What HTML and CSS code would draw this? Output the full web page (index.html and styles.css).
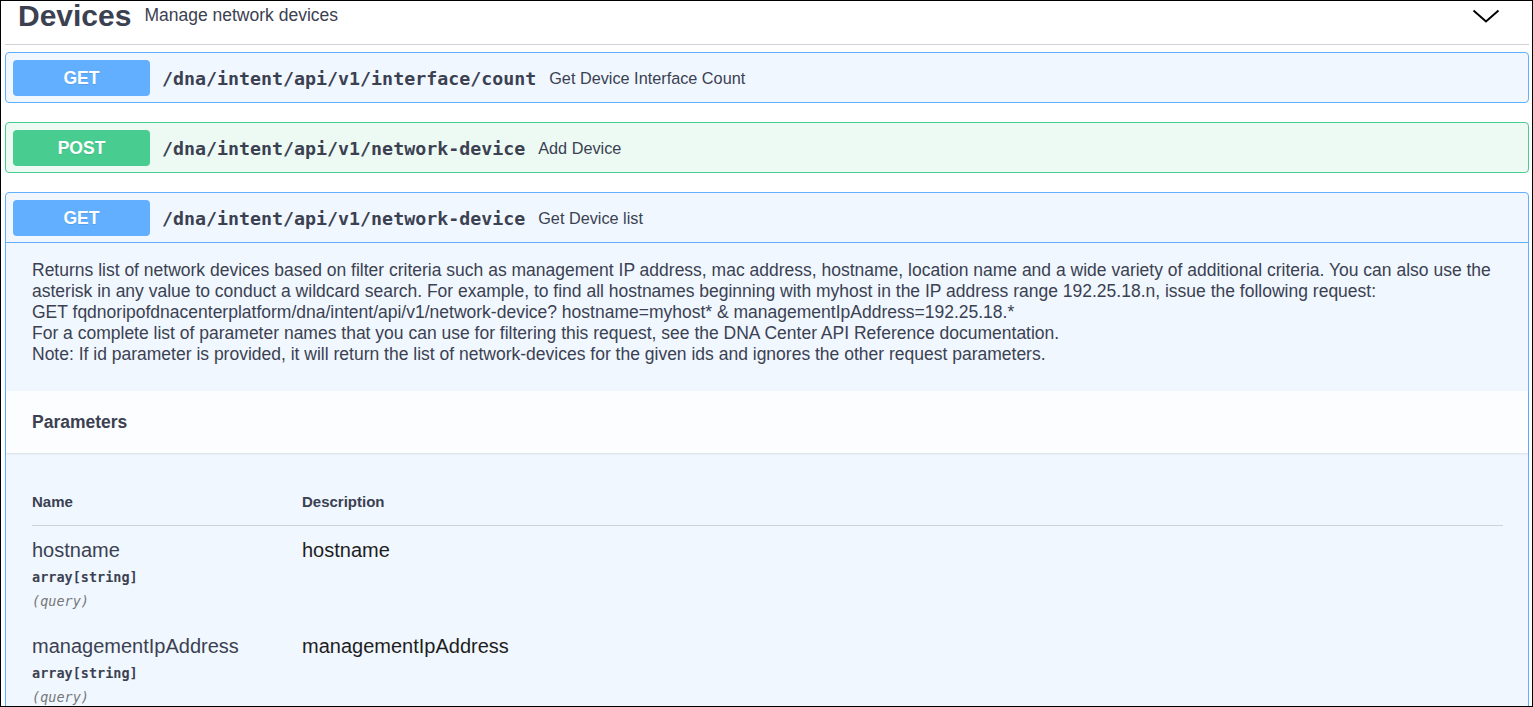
FILE: index.html
```html
<!DOCTYPE html>
<html lang="en">
<head>
<meta charset="utf-8">
<title>Devices</title>
<link rel="stylesheet" href="styles.css">
</head>
<body>
<div class="frame">
  <div class="tag-header">
    <h3 class="tag-title">Devices</h3>
    <small class="tag-desc">Manage network devices</small>
    <svg class="chevron" viewBox="0 0 28 14" width="28" height="14" aria-hidden="true">
      <polyline points="1.5,1.5 14,12.5 26.5,1.5" fill="none" stroke="#000" stroke-width="2"/>
    </svg>
  </div>
  <div class="ops">
    <div class="opblock get">
      <div class="summary">
        <span class="method">GET</span>
        <span class="path">/dna/intent/api/v1/interface/count</span>
        <span class="summary-desc">Get Device Interface Count</span>
      </div>
    </div>
    <div class="opblock post">
      <div class="summary">
        <span class="method">POST</span>
        <span class="path">/dna/intent/api/v1/network-device</span>
        <span class="summary-desc">Add Device</span>
      </div>
    </div>
    <div class="opblock get open">
      <div class="summary">
        <span class="method">GET</span>
        <span class="path">/dna/intent/api/v1/network-device</span>
        <span class="summary-desc">Get Device list</span>
      </div>
      <div class="desc">
        <p>Returns list of network devices based on filter criteria such as management IP address, mac address, hostname, location name and a wide variety of additional criteria. You can also use the asterisk in any value to conduct a wildcard search. For example, to find all hostnames beginning with myhost in the IP address range 192.25.18.n, issue the following request:<br>GET fqdnoripofdnacenterplatform/dna/intent/api/v1/network-device? hostname=myhost* &amp; managementIpAddress=192.25.18.*<br>For a complete list of parameter names that you can use for filtering this request, see the DNA Center API Reference documentation.<br>Note: If id parameter is provided, it will return the list of network-devices for the given ids and ignores the other request parameters.</p>
      </div>
      <div class="section-header"><h4>Parameters</h4></div>
      <div class="table-container">
        <table class="params">
          <thead>
            <tr><th class="col-name">Name</th><th>Description</th></tr>
          </thead>
          <tbody>
            <tr>
              <td>
                <div class="param-name">hostname</div>
                <div class="param-type">array[string]</div>
                <div class="param-in">(query)</div>
              </td>
              <td><div class="param-desc">hostname</div></td>
            </tr>
            <tr>
              <td>
                <div class="param-name">managementIpAddress</div>
                <div class="param-type">array[string]</div>
                <div class="param-in">(query)</div>
              </td>
              <td><div class="param-desc">managementIpAddress</div></td>
            </tr>
            <tr>
              <td>
                <div class="param-name">macAddress</div>
                <div class="param-type">array[string]</div>
                <div class="param-in">(query)</div>
              </td>
              <td><div class="param-desc">macAddress</div></td>
            </tr>
          </tbody>
        </table>
      </div>
    </div>
  </div>
</div>
</body>
</html>
```
FILE: styles.css
```css
* { box-sizing: border-box; }

body {
  margin: 0;
  background: #fff;
  font-family: "Liberation Sans", Arial, sans-serif;
  color: #3b4151;
}

.frame {
  width: 1533px;
  height: 707px;
  border: 1px solid #000;
  overflow: hidden;
  padding: 0 3px 0 4px;
}

.tag-header {
  display: flex;
  align-items: center;
  height: 44px;
  padding: 0 29px 14px 13px;
  border-bottom: 1px solid #cfd1d6;
}

.tag-title {
  margin: 0;
  font-size: 30px;
  line-height: 30px;
  font-weight: 700;
}

.tag-desc {
  flex: 1;
  padding: 0 0 0 13px;
  font-size: 17.5px;
}

.chevron { display: block; }

.ops { padding-top: 7px; }

.opblock {
  border: 1px solid;
  border-radius: 4px;
  margin-bottom: 19px;
}

.opblock.get { border-color: #61affe; background: #f0f7ff; }
.opblock.post { border-color: #49cc90; background: #edfaf4; }

.summary {
  display: flex;
  align-items: center;
  padding: 7px 7px 6px;
}

.open .summary { border-bottom: 1px solid #61affe; }

.method {
  width: 137px;
  height: 36px;
  display: flex;
  align-items: center;
  justify-content: center;
  border-radius: 4px;
  color: #fff;
  font-weight: 700;
  font-size: 17.5px;
  text-shadow: 0 1px 0 rgba(0, 0, 0, .1);
  flex-shrink: 0;
}

.get .method { background: #61affe; }
.post .method { background: #49cc90; }

.path {
  font-family: "DejaVu Sans Mono", monospace;
  font-weight: 700;
  font-size: 18.3px;
  padding: 0 13px 0 12px;
  color: #3b4151;
}

.summary-desc { font-size: 16.25px; }

.desc {
  padding: 17px 26px 26px;
  font-size: 17.5px;
  line-height: 21px;
}

.desc p { margin: 0; }

.section-header {
  background: #fcfdff;
  box-shadow: 0 1px 2px rgba(0, 0, 0, .1);
  min-height: 62px;
  display: flex;
  align-items: center;
  padding: 0 26px;
}

.section-header h4 {
  margin: 0;
  font-size: 17.5px;
  font-weight: 700;
}

.table-container { padding: 25px 25px 25px 26px; }

.params {
  width: 100%;
  border-collapse: collapse;
}

.params th {
  text-align: left;
  font-size: 15px;
  font-weight: 700;
  padding: 15px 0;
  border-bottom: 1px solid #cdd3de;
}

.params th.col-name { width: 270px; }

.params td {
  vertical-align: top;
  padding: 13px 0 12px;
}

.param-name {
  font-size: 20px;
  line-height: 23px;
}

.param-type {
  font-family: "DejaVu Sans Mono", monospace;
  font-weight: 700;
  font-size: 13.5px;
  line-height: 17px;
  padding: 7px 0 6px;
}

.param-in {
  font-family: "DejaVu Sans Mono", monospace;
  font-style: italic;
  font-size: 13.5px;
  line-height: 18px;
  color: #777;
}

.param-desc {
  font-size: 20px;
  line-height: 23px;
  color: #1e1e1e;
}
```
